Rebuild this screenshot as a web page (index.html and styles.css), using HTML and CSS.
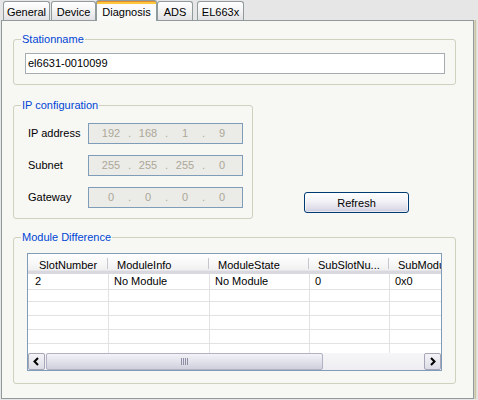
FILE: index.html
```html
<!DOCTYPE html>
<html>
<head>
<meta charset="utf-8">
<link rel="stylesheet" href="styles.css">
</head>
<body>
<div class="window">
  <div class="tabs">
    <div class="tab t-general">General</div>
    <div class="tab t-device">Device</div>
    <div class="tab tab-active t-diag">Diagnosis</div>
    <div class="tab t-ads">ADS</div>
    <div class="tab t-el">EL663x</div>
  </div>
  <div class="panel">
    <fieldset class="group g-station">
      <legend>Stationname</legend>
      <div class="body-station">
        <div class="textbox">el6631-0010099</div>
      </div>
    </fieldset>

    <div class="mid">
      <fieldset class="group g-ip">
        <legend>IP configuration</legend>
        <div class="body-ip">
          <div class="ip-label">IP address</div>
          <div class="ipbox"><span class="seg">192</span><span class="dot">.</span><span class="seg">168</span><span class="dot">.</span><span class="seg">1</span><span class="dot">.</span><span class="seg">9</span></div>
          <div class="ip-label">Subnet</div>
          <div class="ipbox"><span class="seg">255</span><span class="dot">.</span><span class="seg">255</span><span class="dot">.</span><span class="seg">255</span><span class="dot">.</span><span class="seg">0</span></div>
          <div class="ip-label">Gateway</div>
          <div class="ipbox"><span class="seg">0</span><span class="dot">.</span><span class="seg">0</span><span class="dot">.</span><span class="seg">0</span><span class="dot">.</span><span class="seg">0</span></div>
        </div>
      </fieldset>
      <button class="btn">Refresh</button>
    </div>

    <fieldset class="group g-mod">
      <legend>Module Difference</legend>
      <div class="body-mod">
        <div class="list">
          <div class="list-view">
            <div class="lrow lhead">
              <div class="hc">SlotNumber</div>
              <div class="hc">ModuleInfo</div>
              <div class="hc">ModuleState</div>
              <div class="hc">SubSlotNu...</div>
              <div class="hc">SubModuleInfo</div>
            </div>
            <div class="lrow">
              <div class="c">2</div><div class="c">No Module</div><div class="c">No Module</div><div class="c">0</div><div class="c">0x0</div>
            </div>
            <div class="lrow"><div class="c"></div><div class="c"></div><div class="c"></div><div class="c"></div><div class="c"></div></div>
            <div class="lrow"><div class="c"></div><div class="c"></div><div class="c"></div><div class="c"></div><div class="c"></div></div>
            <div class="lrow"><div class="c"></div><div class="c"></div><div class="c"></div><div class="c"></div><div class="c"></div></div>
            <div class="lrow"><div class="c"></div><div class="c"></div><div class="c"></div><div class="c"></div><div class="c"></div></div>
            <div class="lrow"><div class="c"></div><div class="c"></div><div class="c"></div><div class="c"></div><div class="c"></div></div>
          </div>
          <div class="hscroll">
            <div class="sbtn"><svg width="9" height="9" viewBox="0 0 9 9"><path d="M6 1 L2.5 4.5 L6 8" fill="none" stroke="#000" stroke-width="2"/></svg></div>
            <div class="thumb"><span class="grip"></span></div>
            <div class="track"></div>
            <div class="sbtn"><svg width="9" height="9" viewBox="0 0 9 9"><path d="M3 1 L6.5 4.5 L3 8" fill="none" stroke="#000" stroke-width="2"/></svg></div>
          </div>
        </div>
      </div>
    </fieldset>
  </div>
</div>
</body>
</html>
```

FILE: styles.css
```css
* { box-sizing: border-box; }

body {
  margin: 0;
  width: 478px;
  height: 400px;
  overflow: hidden;
  background: #e6e6e6;
  font: 11px "Liberation Sans", Arial, sans-serif;
  color: #000;
}

.window {
  display: flex;
  flex-direction: column;
  height: 400px;
  padding-left: 1px;
}

/* tabs */
.tabs {
  display: flex;
  align-items: flex-end;
  height: 20px;
  padding-left: 2px;
}

.tab {
  height: 19px;
  border: 1px solid #919b9c;
  border-bottom: none;
  border-radius: 3px 3px 0 0;
  background: linear-gradient(#ffffff, #f3f3f3 50%, #e2e2e6);
  text-align: center;
  padding-top: 2px;
  line-height: 17px;
  white-space: nowrap;
}

.t-general { width: 47px; }
.t-device { width: 45px; margin-left: 1px; }
.t-diag { width: 61px; }
.t-ads { width: 36px; }
.t-el { width: 47px; margin-left: 4px; }

.tab-active {
  position: relative;
  z-index: 1;
  height: 21px;
  margin-bottom: -1px;
  border-color: #919b9c;
  background: linear-gradient(#e68b2c 0, #e68b2c 1px, #ffc83c 1px, #ffc83c 3px, #fcfcfc 3px, #f8f8f6);
  padding-top: 2px;
  line-height: 18px;
}

/* panel */
.panel {
  width: 473px;
  height: 379px;
  border: 1px solid #919b9c;
  background: #f7f7f4;
  box-shadow: 1px 0 0 #d6d1bb, 2px 0 0 #cbc5ac, 3px 0 0 #e3dfcf;
  padding: 12px 0 0 11px;
  display: flex;
  flex-direction: column;
}

/* group boxes */
.group {
  margin: 0;
  padding: 0;
  border: 1px solid #d0d0bf;
  border-radius: 3px;
  min-width: 0;
}

.group legend {
  margin-left: 7px;
  padding: 0 1px;
  color: #0046d5;
  line-height: 13px;
}

.g-station { width: 443px; }
.body-station { padding: 7px 0 10px 11px; }

.textbox {
  width: 420px;
  height: 21px;
  border: 1px solid #a5acb2;
  background: #fff;
  padding-left: 2px;
  line-height: 19px;
}

.mid {
  display: flex;
  margin-top: 14px;
}

.g-ip { width: 240px; }

.body-ip {
  display: grid;
  grid-template-columns: 60px 155px;
  row-gap: 11px;
  align-items: center;
  padding: 11px 0 10px 14px;
}

.ip-label { line-height: 21px; }

.ipbox {
  height: 21px;
  border: 1px solid #7f9db9;
  background: #ebebe7;
  color: #aca899;
  display: flex;
  padding-left: 8px;
  line-height: 19px;
}

.seg { width: 28px; text-align: center; }
.dot { width: 9px; text-align: center; }

.btn {
  align-self: flex-end;
  margin: 0 0 6px 51px;
  width: 105px;
  height: 21px;
  padding: 0;
  border: 1px solid #003c74;
  border-radius: 3px;
  background: linear-gradient(#ffffff, #f4f4f8 40%, #dcdbe8 85%, #c6c5d7);
  box-shadow: inset 0 0 0 1px rgba(255,255,255,0.6);
  font: 11px "Liberation Sans", Arial, sans-serif;
  color: #000;
}

.g-mod { width: 443px; margin-top: 12px; }
.body-mod { padding: 9px 0 12px 13px; }

/* list view */
.list {
  width: 415px;
  height: 118px;
  border: 1px solid #7f9db9;
  background: #fff;
  display: flex;
  flex-direction: column;
}

.list-view {
  flex: 1;
  overflow: hidden;
}

.lrow {
  display: grid;
  grid-template-columns: 81px 101px 100px 80px 80px;
  height: 14px;
  width: 442px;
}

.lhead {
  height: 20px;
  background: linear-gradient(#ffffff, #f7f7f7 60%, #efefef);
  border-bottom: 3px solid #d8d8de;
  box-shadow: inset 0 -1px 0 #e6e6ea;
}

.hc {
  padding: 4px 0 0 8px;
  line-height: 14px;
  white-space: nowrap;
  overflow: hidden;
  background: linear-gradient(#c7c7cf, #c7c7cf) no-repeat right 1px top 4px / 1px 11px;
}
.hc:first-child { padding-left: 11px; }

.c {
  border-right: 1px solid #e2e2e2;
  border-bottom: 1px solid #e2e2e2;
  padding-left: 5px;
  line-height: 15px;
  white-space: nowrap;
}
.c:first-child { padding-left: 7px; }

/* scrollbar */
.hscroll {
  height: 17px;
  display: flex;
  background: #f3f3f6;
}

.sbtn {
  width: 17px;
  height: 17px;
  border: 1px solid #a7a6b8;
  border-radius: 2px;
  background: linear-gradient(#f4f4f8, #dcdce6);
  display: flex;
  align-items: center;
  justify-content: center;
}

.thumb {
  width: 277px;
  height: 17px;
  margin-left: 1px;
  border: 1px solid #b2b1c3;
  border-radius: 2px;
  background: linear-gradient(#f2f2f7, #e2e2ec 50%, #cfcfdc);
  display: flex;
  align-items: center;
  justify-content: center;
}

.grip {
  width: 7px;
  height: 7px;
  background: repeating-linear-gradient(to right, #8e8ea4 0, #8e8ea4 1px, transparent 1px, transparent 2px);
}

.track {
  flex: 1;
  background: linear-gradient(#f6f6f8, #eeeef2);
}
```
